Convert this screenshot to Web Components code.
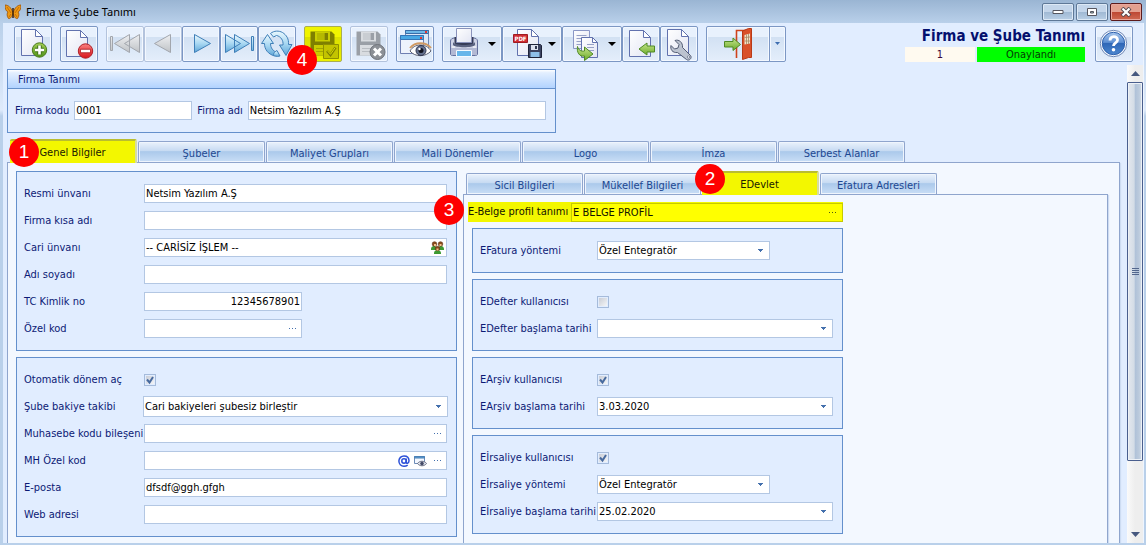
<!DOCTYPE html>
<html lang="tr">
<head>
<meta charset="utf-8">
<title>Firma ve Şube Tanımı</title>
<style>
html, body { margin: 0; height: 100%; overflow: hidden; }
body {
  font: 11px/14px "DejaVu Sans Condensed", "DejaVu Sans", sans-serif;
  color: #0c1a75;
  --line: #6490cc;
  --tab-line: #8fa5cd;
  --field-line: #b3c7e3;
  --client: #e1edff;
  --page: #f3f8ff;
}
</style>
</head>
<body>
<app-window caption="Firma ve Şube Tanımı">
  <tool-bar slot="toolbar">
    <tool-group><tool-button icon="new" label="Yeni"></tool-button></tool-group>
    <tool-group><tool-button icon="remove" label="Sil"></tool-button></tool-group>
    <tool-group>
      <tool-button icon="first" label="İlk kayıt" disabled></tool-button>
      <tool-button icon="prev" label="Önceki kayıt" disabled></tool-button>
      <tool-button icon="next" label="Sonraki kayıt"></tool-button>
      <tool-button icon="last" label="Son kayıt"></tool-button>
      <tool-button icon="refresh" label="Yenile"></tool-button>
    </tool-group>
    <tool-group><tool-button icon="save" label="Kaydet" marked><step-badge style="left:-17px;top:19px">4</step-badge></tool-button></tool-group>
    <tool-group><tool-button icon="cancel" label="Vazgeç" disabled></tool-button></tool-group>
    <tool-group><tool-button icon="view" label="İzle"></tool-button></tool-group>
    <tool-group>
      <tool-button icon="print" label="Yazdır" menu></tool-button>
      <tool-button icon="pdf" label="PDF kaydet" menu></tool-button>
      <tool-button icon="copy" label="Aktar" menu></tool-button>
      <tool-button icon="import" label="İçe al"></tool-button>
      <tool-button icon="tools" label="Ayarlar"></tool-button>
    </tool-group>
    <tool-group><tool-button icon="exit" label="Çıkış" split></tool-button></tool-group>
    <record-status slot="end" heading="Firma ve Şube Tanımı" number="1" state="Onaylandı"></record-status>
    <tool-button slot="end" icon="help" label="Yardım"></tool-button>
  </tool-bar>

  <title-panel heading="Firma Tanımı">
    <inline-field label="Firma kodu" value="0001" style="--w:118px"></inline-field>
    <inline-field label="Firma adı" value="Netsim Yazılım A.Ş" style="--w:298px"></inline-field>
  </title-panel>

  <tab-book style="--tab:127px;--inset:3px;--gap:6px" tabs="Genel Bilgiler|Şubeler|Maliyet Grupları|Mali Dönemler|Logo|İmza|Serbest Alanlar" active="0" badge="1">
    <panel-stack class="left">
      <form-panel style="--label:120px;--side:7px">
        <form-field label="Resmi ünvanı" value="Netsim Yazılım A.Ş"></form-field>
        <form-field label="Firma kısa adı"></form-field>
        <form-field label="Cari ünvanı" value="-- CARİSİZ İŞLEM --" actions="people"></form-field>
        <form-field label="Adı soyadı"></form-field>
        <form-field label="TC Kimlik no" value="12345678901" numeric narrow></form-field>
        <form-field label="Özel kod" actions="more" narrow></form-field>
      </form-panel>
      <form-panel style="--label:120px;--side:7px">
        <form-field type="check" label="Otomatik dönem aç" checked></form-field>
        <form-field type="select" label="Şube bakiye takibi" value="Cari bakiyeleri şubesiz birleştir" tall></form-field>
        <form-field label="Muhasebe kodu bileşeni" actions="more"></form-field>
        <form-field label="MH Özel kod" actions="at,preview,more"></form-field>
        <form-field label="E-posta" value="dfsdf@ggh.gfgh"></form-field>
        <form-field label="Web adresi"></form-field>
      </form-panel>
    </panel-stack>
    <tab-book class="right" style="--tab:117px;--inset:3px;--gap:0px" tabs="Sicil Bilgileri|Mükellef Bilgileri|EDevlet|Efatura Adresleri" active="2" badge="2" inner>
      <panel-stack class="edevlet">
        <profile-row label="E-Belge profil tanımı" value="E BELGE PROFİL"><step-badge style="left:-34px;top:-7px">3</step-badge></profile-row>
        <form-panel style="--label:117px;--side:7px;--narrow:173px">
          <form-field type="select" label="EFatura yöntemi" value="Özel Entegratör" narrow></form-field>
        </form-panel>
        <form-panel style="--label:117px;--side:7px">
          <form-field type="check" label="EDefter kullanıcısı"></form-field>
          <form-field type="date" label="EDefter başlama tarihi"></form-field>
        </form-panel>
        <form-panel style="--label:117px;--side:7px">
          <form-field type="check" label="EArşiv kullanıcısı" checked></form-field>
          <form-field type="date" label="EArşiv başlama tarihi" value="3.03.2020"></form-field>
        </form-panel>
        <form-panel style="--label:117px;--side:7px;--narrow:173px">
          <form-field type="check" label="Eİrsaliye kullanıcısı" checked></form-field>
          <form-field type="select" label="Eİrsaliye yöntemi" value="Özel Entegratör" narrow></form-field>
          <form-field type="date" label="Eİrsaliye başlama tarihi" value="25.02.2020"></form-field>
        </form-panel>
      </panel-stack>
    </tab-book>
  </tab-book>
</app-window>

<script>
/* Gradients and shapes shared by the toolbar icons; each icon carries its own copy because ids are scoped to a shadow root. */
const DEFS = `<defs>
<linearGradient id="pg" x1="0" y1="0" x2="1" y2="1"><stop offset="0" stop-color="#fff"/><stop offset="1" stop-color="#e2e5f3"/></linearGradient>
<linearGradient id="bl" x1="0" y1="0" x2="0" y2="1"><stop offset="0" stop-color="#eaf8fe"/><stop offset=".5" stop-color="#a9d8f2"/><stop offset="1" stop-color="#5ea6d8"/></linearGradient>
<linearGradient id="gy" x1="0" y1="0" x2="0" y2="1"><stop offset="0" stop-color="#eef0f2"/><stop offset="1" stop-color="#bfc2c6"/></linearGradient>
<linearGradient id="gn" x1="0" y1="0" x2="0" y2="1"><stop offset="0" stop-color="#c6e58c"/><stop offset="1" stop-color="#6cab28"/></linearGradient>
<linearGradient id="gr" x1="0" y1="0" x2="0" y2="1"><stop offset="0" stop-color="#a5cf55"/><stop offset="1" stop-color="#4d9216"/></linearGradient>
<linearGradient id="rd" x1="0" y1="0" x2="0" y2="1"><stop offset="0" stop-color="#f98080"/><stop offset="1" stop-color="#d9151c"/></linearGradient>
<linearGradient id="hp" x1="0" y1="0" x2="0" y2="1"><stop offset="0" stop-color="#a9c8ee"/><stop offset=".45" stop-color="#5d8fd3"/><stop offset=".5" stop-color="#2f67b7"/><stop offset="1" stop-color="#4c87cf"/></linearGradient>
</defs>`;
const page = (x, y, w, h, f = 7) => `<path d="M${x} ${y}h${w - f}l${f} ${f}v${h - f}h${-w}z" fill="url(#pg)" stroke="#6272ae"/><path d="M${x + w - f} ${y}v${f}h${f}z" fill="#fff" stroke="#6272ae" stroke-linejoin="round"/>`;
const floppy = (a, b) => `<path d="M4.500 4.500h21l3 3v21h-24z" fill="${a}"/><path d="M9 4.500h15v10h-15z" fill="${b}"/><path d="M11 6h7v7h-7z" fill="${a}" opacity=".25"/><path d="M18.500 6h3.500v7h-3.500z" fill="${a}"/><path d="M8 18h17v10.500h-17z" fill="${b}"/><path d="M10 21.500h13M10 24.500h13" stroke="${a}" opacity=".5"/>`;
const ICONS = {
  new: page(5.5, 2.5, 21, 26) + `<circle cx="23.500" cy="23" r="7.200" fill="url(#gr)" stroke="#4c7a1e"/><path d="M23.500 18.500v9M19 23h9" stroke="#40701a" stroke-width="4.500"/><path d="M23.500 18.500v9M19 23h9" stroke="#fff" stroke-width="2.600"/>`,
  remove: page(4.5, 3.500, 21, 26) + `<circle cx="23.500" cy="24" r="7.200" fill="url(#rd)" stroke="#b01f26"/><path d="M18.500 24h10" stroke="#b01f26" stroke-width="4.500"/><path d="M19 24h9" stroke="#fff" stroke-width="2.600"/>`,
  first: `<g fill="url(#gy)" stroke="#a2a6ad" stroke-linejoin="round"><path d="M2.500 9.500h2v14h-2zM21.500 7.500v18l-15-9zM31.500 7.500v18l-15-9z"/></g>`,
  prev: `<path d="M24.500 7.500v18l-16-9z" fill="url(#gy)" stroke="#a2a6ad" stroke-linejoin="round"/>`,
  next: `<path d="M10.500 7.500v18l16-9z" fill="url(#bl)" stroke="#3f7fb8" stroke-linejoin="round"/>`,
  last: `<g fill="url(#bl)" stroke="#3f7fb8" stroke-linejoin="round"><path d="M3.500 7.500v18l15-9zM12.500 7.500v18l15-9zM29.500 9.500h2v14h-2z"/></g>`,
  refresh: `<g fill="url(#bl)" stroke="#3f7fb8" stroke-linejoin="round"><path d="M1.500 16.500L7.500 7.500L13.500 16.500H10.500C10.500 21 13 24 17 25.500L14.500 29C8 27 4.500 22.500 4.500 16.500z"/><path d="M10.500 6.500C14 3.500 19 3.500 22.500 5.500C26.500 8 29 12 28.500 17.500H32L26 28.500L19.500 18H23C23.500 13.500 21 9.500 16.500 8.500L13.500 10z"/><path d="M17 23.500L20 29C18.500 29.500 16.500 29.500 14.500 29C12.500 27.500 14 25 17 23.500z"/></g>`,
  save: `<g>${floppy('#7f8000', '#c9cd00')}</g><path d="M17.500 17.500h15v14h-15z" fill="#c3c400" stroke="#8f9000"/><path d="M21 24l3.500 4l5-7.500" fill="none" stroke="#7d7f00" stroke-width="2.500"/><path d="M21.500 23.800l3 3.500l4.500-6.500" fill="none" stroke="#d8dc00"/>`,
  cancel: floppy('#9a9fa6', '#d9dce0') + `<circle cx="25.500" cy="25" r="7.500" fill="#8c9096" stroke="#6f737a"/><path d="M22 21.500l7 7M29 21.500l-7 7" stroke="#fff" stroke-width="3"/>`,
  view: `<path d="M7.500 3.500h23v6h-23z" fill="#3ba0e0" stroke="#3a6ea8"/><path d="M7.500 5.500h23v16h-23z" fill="#dbe7f7" stroke="#6b86b5"/><path d="M7.500 3.500h23v3h-23z" fill="#6fb9e8" stroke="#3a6ea8"/><path d="M2.500 8.500h23v18h-23z" fill="#eef3fc" stroke="#6f7fb2"/><path d="M2.500 8.500h23v4h-23z" fill="#48a8e4" stroke="#3477b8"/><path d="M27 4h2v2h-2zM22 10h2v2h-2z" fill="#e03535"/><path d="M12 24C16 16.500 28 15.500 33 24C28 30 17 30.500 12 24z" fill="#fff" stroke="#5a5f72"/><path d="M12 21C17 14.500 28 14.500 33 21" fill="none" stroke="#d09a63" stroke-width="2"/><circle cx="23" cy="23.500" r="5" fill="#64718f" stroke="#2e3650"/><circle cx="23" cy="23.500" r="2.500" fill="#10131f"/><circle cx="21.500" cy="22" r="1.200" fill="#fff"/>`,
  print: `<path d="M2.500 14c0-2 2-3 4-3h19c2 0 4 1 4 3v13c0 1-1 1.500-2 1.500h-23c-1 0-2-.5-2-1.500z" fill="#cfd3e6" stroke="#65709e"/><path d="M6.500 10h19v6l-2 3h-15l-2-3z" fill="#363c58"/><path d="M8.500 1.500h15v14h-15z" fill="url(#pg)" stroke="#8a93bb"/><path d="M5 15c2 4 20 4 22 0v3c-2 3-20 3-22 0z" fill="#59617f"/><path d="M3 21h26v7h-26z" fill="#b3b9d4"/><path d="M8.500 23.500h15v6h-15z" fill="#67b6ea" stroke="#f4faff"/><path d="M4 20h3M25 20h3" stroke="#fff"/>`,
  pdf: page(9.5, 2.500, 21, 26) + `<path d="M5.500 7.500h14v8h-14z" fill="#cf2d32" stroke="#a01b20"/><text x="12.500" y="14" fill="#fff" font-family="DejaVu Sans Condensed, sans-serif" font-size="6" font-weight="bold" text-anchor="middle">PDF</text><path d="M20.500 17.500h12l1 1v12h-13z" fill="#3c4360" stroke="#1e2338"/><path d="M23 18h7v5h-7z" fill="#dde1ee"/><path d="M27 19h2v3h-2z" fill="#30374f"/><path d="M22.500 25h9v5h-9z" fill="#8ec0e9"/>`,
  copy: `<g><path d="M5.500 3.500h16v18h-16z" fill="url(#pg)" stroke="#8b97c6"/><path d="M8.500 8.500h10M8.500 11.500h7M8.500 14.500h7M8.500 17.500h5" stroke="#97a1c6"/>${page(13.5, 10.500, 16, 20, 5)}<path d="M19 17.500h7M19 20.500h7M19 23.500h7" stroke="#97a1c6"/></g><path d="M9.500 19.500c1 4 4 5 7 4.500v-4l8.500 7l-8.500 6.500v-4.500c-5 1-8-3.500-7-9.500z" fill="url(#gn)" stroke="#4f8a24" stroke-linejoin="round"/>`,
  import: page(5.5, 3.500, 21, 26) + `<path d="M15 22l8-6v3h7.500v6h-7.500v3z" fill="url(#gn)" stroke="#4f8a24" stroke-linejoin="round"/>`,
  tools: page(5.5, 2.500, 21, 26) + `<path d="M13 13.500l4 4l-1 3.500l-3.500 1l-3.500-3.500c-1 4 1.500 7.500 6.500 7l9 7c2.500 2 6-1.500 4-4l-8-8c.5-5-3.500-8.500-7.500-7z" fill="#bcc3d0" stroke="#535c74" stroke-linejoin="round"/><circle cx="26.500" cy="30" r="1.200" fill="#f2f5fb" stroke="#535c74" stroke-width=".6"/>`,
  exit: `<path d="M15.500 31v-27.500h12" fill="none" stroke="#cf431c" stroke-width="1.600"/><path d="M21.500 4l6-2.500h3v29h-3l-6 2z" fill="#d9512a" stroke="#b93a17"/><path d="M23.500 8l5.500-1.500v10l-5.500 1z" fill="#f0e3c9"/><path d="M25.500 7.500v9.500M27.500 7v10M23.500 10.500l5.500-.5M23.500 14h5.500" stroke="#a78560" stroke-width=".8"/><path d="M3.500 14.500h8.500v-3.500l7.500 6.500l-7.500 6v-3.500h-8.500z" fill="url(#gn)" stroke="#4f8a24" stroke-linejoin="round"/>`,
  help: `<circle cx="16.500" cy="16.500" r="13.200" fill="#f3f7fd" stroke="#6d87b6"/><circle cx="16.500" cy="16.500" r="11.200" fill="url(#hp)" stroke="#2f62ae"/><path d="M13 13.500c0-5 7.500-5 7.500-.6c0 3-4 3-4 6" fill="none" stroke="#fff" stroke-width="2.800"/><circle cx="16.500" cy="22.800" r="1.800" fill="#fff"/>`
};
const SMALL = {
  people: `<svg width="13" height="13" viewBox="0 0 13 13"><g fill="#3d9a32"><path d="M0 8c0-4 6-4 6 0v1H0zM7 8c0-4 6-4 6 0v1H7zM3 13v-1c0-4 7-4 7 0v1z"/></g><g fill="#8a4b1c" stroke="#5d3010" stroke-width=".6"><circle cx="3.500" cy="3" r="2.300"/><circle cx="9.500" cy="3" r="2.300"/><circle cx="6.500" cy="7.500" r="2.200"/></g><g fill="#f1c08a"><path d="M3 3h2v2h-2zM8.500 3h2v2h-2zM5.500 7.500h2v2h-2z"/></g></svg>`,
  at: `<svg width="12" height="12" viewBox="0 0 12 12" fill="none" stroke="#2b50d8"><circle cx="6" cy="6" r="2.200" stroke-width="1.500"/><path d="M8.300 3.500v4.300c.5 1.200 2.700.5 2.700-2C11 2.700 8.800.900 6 .900S.900 3.200.900 6S3 11.200 6 11.200c1.500 0 2.700-.4 3.700-1.100" stroke-width="1.500"/></svg>`,
  preview: `<svg width="13" height="12" viewBox="0 0 13 12"><path d="M.500 1.500h10v7h-10z" fill="#f4f8ff" stroke="#6c8bb6"/><path d="M.500 1.500h10v1.500h-10z" fill="#5aa2d8" stroke="#4c80b5"/><path d="M3.500 8.500c2-3 7-3 9 0c-2 3-7 3-9 0z" fill="#dfe3ec" stroke="#666b80"/><circle cx="8" cy="8.500" r="1.800" fill="#444a66"/></svg>`,
  more: `<svg width="8" height="3" viewBox="0 0 8 3"><path d="M0 1h1v1h-1zM3 1h1v1h-1zM6 1h1v1h-1z" fill="currentColor"/></svg>`
};
const ACTION_LABELS = { people: 'Cari seç', at: 'Etiket', preview: 'Önizle', more: 'Seç' };
const BASE = `*{box-sizing:border-box} button,input,select{font:inherit;color:inherit;margin:0;padding:0;border:0;border-radius:0;background:none;outline:none}`;

function define(name, render) {
  customElements.define(name, class extends HTMLElement {
    connectedCallback() {
      if (this.shadowRoot) return;
      const root = this.attachShadow({ mode: 'open' });
      root.innerHTML = render(this);
    }
  });
}
const at = (el, name, fallback = '') => el.getAttribute(name) ?? fallback;

define('app-window', el => `<style>${BASE}
:host{display:flex;flex-direction:column;height:100vh;box-sizing:border-box;padding:0 2px 2px 3px;background:linear-gradient(#9ab5d3,#b9d0ea 23px,#dfebfb 110px,#b9d0ea 116px)}
header{height:23px;flex:none;display:flex;align-items:center;justify-content:space-between;padding:0 0 0 2px}
h1{margin:0;display:flex;align-items:center;gap:5px;font:11px/16px "Noto Sans","Open Sans",sans-serif;color:#000}
.controls{display:flex;gap:2px;padding-right:2px}
.controls button{width:32px;height:18px;border:1px solid #5e7897;border-radius:2px;box-shadow:inset 0 0 0 1px #dde9f6;background:linear-gradient(#c3d5ea 50%,#9fb8d3 50%,#b9cfe6);display:grid;place-items:center}
.controls .close{border-color:#5b1b1c;box-shadow:inset 0 0 0 1px #e9a79d;background:linear-gradient(#e3a08f 50%,#bd4632 50%,#cf6a52)}
main{flex:1;min-height:0;display:flex;flex-direction:column;background:var(--client);border-right:1px solid #eef5ff}
.body{flex:1;min-height:0;display:flex}
.scroll{flex:1;min-width:0;overflow:hidden;display:flex;flex-direction:column;padding:4px 7px 0 4px}
.bar{width:16px;flex:none;display:flex;flex-direction:column;background:linear-gradient(90deg,#fafafa,#eee 50%)}
.bar button{height:17px;display:grid;place-items:center}
.thumb{height:379px;border:1px solid #4a5f8e;border-radius:1px;box-shadow:inset 0 0 0 1px #edf1f6;background:linear-gradient(90deg,#e4e8ee,#d3dce6 45%,#afc1d8 50%,#bccbdd 80%,#d8e0ea);display:grid;place-items:center}
.rest{flex:1}
</style>
<header><h1><svg width="16" height="16" viewBox="0 0 16 16"><path d="M7.500 8C6 3 3 1 0 1c0 4 1 6 3 7c-1 1-1.500 4 .5 6.500c2 .5 3.500-2 4.500-5c1 3 2.500 5.500 4.500 5c2-2.500 1.500-5.500.5-6.500c2-1 3-3 3-7c-3 0-6 2-7.500 7z" fill="#ef9a12" stroke="#9c4f06" stroke-width=".8"/><path d="M8 4v10" stroke="#3c2208" stroke-width="1.500"/><path d="M2 3l4 6M14 3l-4 6M4 13l2-3M12 13l-2-3" stroke="#b66207" stroke-width=".8"/></svg>${at(el, 'caption')}</h1>
<div class="controls">
<button aria-label="Küçült"><svg width="12" height="6"><path d="M1 1.500h10v3h-10z" fill="#fff" stroke="#56565f"/></svg></button>
<button aria-label="Büyüt"><svg width="12" height="10"><path d="M1.500 1.500h9v7h-9z" fill="#fff" stroke="#56565f"/><path d="M4.500 4.500h3v1.500h-3z" fill="#9bb" stroke="#56565f"/></svg></button>
<button class="close" aria-label="Kapat"><svg width="12" height="10"><path d="M2 1l8 8M10 1l-8 8" stroke="#56464c" stroke-width="4"/><path d="M2.500 1.500l7 7M9.500 1.500l-7 7" stroke="#fff" stroke-width="2.200"/></svg></button></div></header>
<main><slot name="toolbar"></slot><div class="body"><div class="scroll"><slot></slot></div>
<div class="bar"><button aria-label="Yukarı"><svg width="9" height="5"><path d="M4.500 0L9 5H0z" fill="#46587f"/></svg></button><div class="thumb"><svg width="7" height="8"><path d="M0 .500h7M0 2.500h7M0 4.500h7M0 6.500h7" stroke="#53678d"/></svg></div><div class="rest"></div><button aria-label="Aşağı"><svg width="9" height="5"><path d="M4.500 5L9 0H0z" fill="#46587f"/></svg></button></div></div></main>`);

define('tool-bar', () => `<style>${BASE}
:host{display:flex;justify-content:space-between;flex:none;padding:3px 10px 3px 11px}
div{display:flex;gap:8px}.end{gap:10px}
</style><div><slot></slot></div><div class="end"><slot name="end"></slot></div>`);

define('tool-group', () => `<style>:host{display:flex}</style><slot></slot>`);

define('tool-button', el => {
  const off = el.hasAttribute('disabled'), menu = el.hasAttribute('menu'), split = el.hasAttribute('split');
  return `<style>${BASE}
:host{display:flex;position:relative}
button{width:38px;height:36px;border:1px solid #7c97c4;border-radius:2px;box-shadow:inset 0 0 0 1px #f3f8ff;background:linear-gradient(#e8f1fd 28%,#d2e1f3 30%,#e4eefb);display:flex;align-items:center;justify-content:center;gap:6px}
button:disabled{border-color:#b3c3dd}
:host([menu]) button{width:60px}
:host([split]) button{width:64px;border-radius:2px 0 0 2px}
:host([split]) .drop{width:17px;margin-left:-1px;border-radius:0 2px 2px 0}
:host([marked]) button{border-color:#a9ae52;background:linear-gradient(#f0f400 28%,#dbe000 30%,#ecf000);box-shadow:none}
svg{display:block;flex:none}
</style><button aria-label="${at(el, 'label')}"${off ? ' disabled' : ''}><svg width="34" height="34" viewBox="0 0 34 34">${DEFS}${ICONS[at(el, 'icon')]}</svg>${menu ? '<svg width="8" height="4"><path d="M0 0h8l-4 4z" fill="#000"/></svg>' : ''}</button>${split ? '<button class="drop" aria-label="Çıkış seçenekleri"><svg width="5" height="4"><path d="M0 0h5l-2.500 3z" fill="#3d6db0"/></svg></button>' : ''}<slot></slot>`;
});

define('record-status', el => `<style>${BASE}
:host{display:block;width:180px;text-align:center;color:#000}
h2{margin:0;font:bold 15px/21px "DejaVu Sans Condensed","DejaVu Sans",sans-serif;color:#04106e;text-align:right}
div{display:grid;grid-template-columns:70px 1fr;gap:2px;line-height:15px}
.n{background:#fffaf0;color:#3a0a3a}.s{background:#0f0;color:#053a05}
</style><h2>${at(el, 'heading')}</h2><div><span class="n">${at(el, 'number')}</span><span class="s">${at(el, 'state')}</span></div>`);

define('step-badge', () => `<style>
:host{position:absolute;z-index:5;width:30px;height:30px;border-radius:50%;background:#fe0000;color:#fff;display:grid;place-items:center;font:19px/30px "Liberation Sans",Arial,sans-serif}
</style><slot></slot>`);

define('title-panel', el => `<style>${BASE}
:host{display:block;flex:none;width:549px;max-width:100%;height:64px;box-sizing:border-box;border:1px solid var(--line);margin-bottom:6px}
h3{margin:0;padding:0 10px;font:inherit;line-height:19px;height:19px;border-bottom:1px solid var(--line);background:linear-gradient(#fff,#e3efff 15%,#b2d3ff)}
div{display:flex;gap:5px;padding:12px 7px}
</style><h3>${at(el, 'heading')}</h3><div><slot></slot></div>`);

define('inline-field', el => `<style>${BASE}
:host{display:flex}
label{display:flex;align-items:center;gap:5px}
input{width:var(--w);height:19px;border:1px solid var(--field-line);background:#fff;color:#000;padding:0 1px}
</style><label>${at(el, 'label')} <input value="${at(el, 'value')}"></label>`);

define('tab-book', el => {
  const active = +at(el, 'active'), badge = at(el, 'badge');
  const tabs = at(el, 'tabs').split('|').map((t, i) => `<button role="tab" aria-selected="${i === active}">${t}${i === active ? `<step-badge class="b">${badge}</step-badge>` : ''}</button>`).join('');
  return `<style>${BASE}
:host{display:flex;flex-direction:column;flex:1;min-width:0;min-height:0}
nav{display:flex;align-items:flex-end;gap:1px;height:23px;flex:none;padding-left:var(--inset);position:relative;z-index:2}
button{position:relative;width:var(--tab);height:21px;border:1px solid var(--tab-line);border-bottom:0;border-radius:2px 2px 0 0;box-shadow:inset 0 0 0 1px #eff5fd;background:linear-gradient(#eaf2fc,#c6daf2 45%,#abc9eb 48%,#c9def6);color:#1d4791;line-height:19px;padding-top:2px}
button[aria-selected=true]{height:24px;margin-bottom:-1px;background:#f3f700;border:0;border-top:2px solid #b9bd30;border-right:2px solid #d5dca0;box-shadow:none;color:#202000;padding:0}
.b{left:${el.hasAttribute('inner') ? -7 : -1}px;top:${el.hasAttribute('inner') ? -9 : -4}px}
section{flex:1;min-height:0;display:flex;gap:var(--gap);background:var(--page);border:1px solid var(--tab-line);border-bottom:0;box-shadow:1px 1px 1px #cddcf2}
:host(:not([inner])) section{padding:8px 11px 0 8px}
:host([inner]) section{padding:0 0 0 4px}
::slotted(.left){flex:0 0 441px}
::slotted(.edevlet){flex:0 0 375px}
</style><nav role="tablist">${tabs}</nav><section><slot></slot></section>`;
});

define('panel-stack', () => `<style>:host{display:flex;flex-direction:column;gap:6px;min-width:0}
::slotted(form-panel){flex:none}
:host(.edevlet) ::slotted(form-panel){margin-left:4px}
</style><slot></slot>`);

define('form-panel', () => `<style>:host{display:block;box-sizing:border-box;border:1px solid var(--line);background:var(--client);padding:8px 9px 8px var(--side)}</style><slot></slot>`);

define('profile-row', el => `<style>${BASE}
:host{display:block;position:relative;margin-top:7px;height:20px}
div{display:grid;grid-template-columns:103px 1fr;background:#f3f700;height:20px;align-items:end;color:#141400}
label{line-height:20px;white-space:nowrap}
.f{display:flex;height:19px;border:1px solid #c6ca00;background:#ff0;align-items:center}
input{flex:1;min-width:0;color:#141400;padding:0 1px}
button{width:18px;display:grid;place-items:center;color:#4c5a10}
</style><div><label for="p">${at(el, 'label')}</label><span class="f"><input id="p" value="${at(el, 'value')}"><button aria-label="Seç">${SMALL.more}</button></span></div><slot></slot>`);

define('form-field', el => {
  const type = at(el, 'type', 'text'), value = at(el, 'value');
  const arrow = '<svg class="arrow" width="5" height="3"><path d="M0 0h5v1h-1v1h-1v1h-1v-1h-1v-1h-1z" fill="#4470ad"/></svg>';
  let control;
  if (type === 'check') control = `<input id="f" type="checkbox"${el.hasAttribute('checked') ? ' checked' : ''}>`;
  else if (type === 'select') control = `<span class="box"><select id="f"><option>${value}</option></select>${arrow}</span>`;
  else {
    const acts = at(el, 'actions').split(',').filter(Boolean).map(a => `<button class="act" aria-label="${ACTION_LABELS[a]}">${SMALL[a]}</button>`).join('');
    control = `<span class="box"><input id="f" value="${value}">${acts}${type === 'date' ? `<button class="pick" aria-label="Tarih seç">${arrow}</button>` : ''}</span>`;
  }
  return `<style>${BASE}
:host{display:grid;grid-template-columns:var(--label) 1fr;align-items:center;height:27px}
label{white-space:nowrap}
.box{display:flex;align-items:center;position:relative;height:19px;border:1px solid var(--field-line);background:#fff;color:#000;width:100%}
:host([narrow]) .box{width:var(--narrow,158px)}
:host([tall]) .box{height:21px;width:calc(100% + 2px);margin-left:-1px}
.box input,.box select{flex:1;min-width:0;width:100%;height:100%;padding:0 1px}
:host([numeric]) input{text-align:right}
select{appearance:none}
select+.arrow{position:absolute;right:6px;pointer-events:none}
.act{display:grid;place-items:center;width:17px;height:17px;color:#4470ad}
.pick{display:grid;place-items:center;width:17px;height:17px}
input[type=checkbox]{appearance:none;width:12px;height:12px;border:1px solid #a5bbdb;background:linear-gradient(135deg,#c9cdd6,#f4f5f7) content-box #fff;padding:1px;display:block}
input[type=checkbox]:checked{background:url("data:image/svg+xml,%3Csvg xmlns='http://www.w3.org/2000/svg' width='10' height='10'%3E%3Cpath d='M2 4.500L4.500 7.500L8 2' fill='none' stroke='%23476a9f' stroke-width='2'/%3E%3C/svg%3E") 0 0/10px no-repeat padding-box,linear-gradient(135deg,#c9cdd6,#f4f5f7) content-box #fff}
</style><label for="f">${at(el, 'label')}</label>${control}`;
});
</script>
</body>
</html>
